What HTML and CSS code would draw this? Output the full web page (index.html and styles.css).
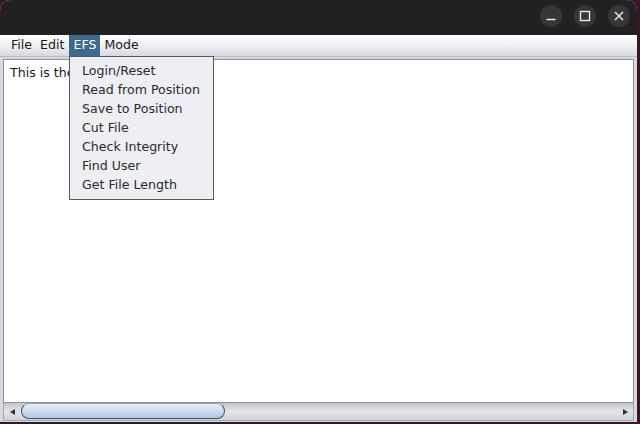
FILE: index.html
```html
<!DOCTYPE html>
<html>
<head>
<meta charset="utf-8">
<link rel="stylesheet" href="styles.css">
</head>
<body>
<div class="desktop">
  <div class="window">
    <div class="titlebar">
      <div class="tb-btn">
        <svg width="22" height="22" viewBox="0 0 22 22"><line x1="6.5" y1="14.5" x2="15.5" y2="14.5" stroke="#e8e8e8" stroke-width="1.4"/></svg>
      </div>
      <div class="tb-btn">
        <svg width="22" height="22" viewBox="0 0 22 22"><rect x="6.5" y="6.5" width="9" height="9" fill="none" stroke="#e8e8e8" stroke-width="1.4"/></svg>
      </div>
      <div class="tb-btn">
        <svg width="22" height="22" viewBox="0 0 22 22"><path d="M7 7 L15 15 M15 7 L7 15" stroke="#e8e8e8" stroke-width="1.5"/></svg>
      </div>
    </div>
    <div class="menubar">
      <span class="menu">File</span>
      <span class="menu">Edit</span>
      <span class="menu active">EFS</span>
      <span class="menu">Mode</span>
    </div>
    <div class="content">
      <div class="textarea">This is the</div>
      <div class="hscroll">
        <div class="arrow">
          <svg width="8" height="8" viewBox="0 0 8 8"><path d="M1 4 L6 1 L6 7 Z" fill="#333"/></svg>
        </div>
        <div class="track">
          <div class="thumb"></div>
          <div class="trackfill"></div>
        </div>
        <div class="arrow">
          <svg width="8" height="8" viewBox="0 0 8 8"><path d="M7 4 L2 1 L2 7 Z" fill="#333"/></svg>
        </div>
      </div>
    </div>
    <div class="popup">
      <div class="item">Login/Reset</div>
      <div class="item">Read from Position</div>
      <div class="item">Save to Position</div>
      <div class="item">Cut File</div>
      <div class="item">Check Integrity</div>
      <div class="item">Find User</div>
      <div class="item">Get File Length</div>
    </div>
  </div>
</div>
</body>
</html>
```

FILE: styles.css
```css
html, body {
  margin: 0;
  padding: 0;
  width: 640px;
  height: 424px;
  overflow: hidden;
  background: #2a1420;
}
.desktop {
  width: 640px;
  height: 424px;
  background: #3a1526;
  display: flex;
}
.window {
  position: relative;
  width: 637px;
  height: 422px;
  display: flex;
  flex-direction: column;
  background: #d4d6dc;
  border-radius: 10px 10px 0 0;
  overflow: hidden;
  font-family: "DejaVu Sans", sans-serif;
  font-size: 12.6px;
  color: #1a1a1a;
}
.titlebar {
  height: 35px;
  flex: none;
  background: #212121;
  display: flex;
  justify-content: flex-end;
  align-items: center;
  gap: 12px;
  padding-right: 7px;
  box-sizing: border-box;
}
.tb-btn {
  width: 22px;
  height: 22px;
  border-radius: 50%;
  background: #363636;
  display: flex;
  margin-top: -3px;
}
.menubar {
  height: 21px;
  flex: none;
  background: linear-gradient(#ffffff 0%, #f1f2f5 45%, #d7d9e0 100%);
  display: flex;
  align-items: stretch;
  padding-left: 7px;
  border-bottom: 1px solid #b9bcc4;
}
.menu {
  padding: 0 4px;
  display: flex;
  align-items: center;
  line-height: 1;
}
.menu.active {
  background: #3b6a8c;
  color: #ffffff;
  margin-left: 1px;
}
.content {
  flex: 1;
  display: flex;
  flex-direction: column;
  padding: 2px 3px 0 3px;
  background: #d7d9df;
}
.textarea {
  flex: 1;
  background: #ffffff;
  border: 1px solid #8d9098;
  padding: 5px 6px;
  line-height: 16px;
}
.hscroll {
  height: 17px;
  flex: none;
  display: flex;
  align-items: stretch;
  background: linear-gradient(#c4c6cc, #e2e4e8 50%, #cfd1d6);
  border: 1px solid #a6a8ae;
  border-top: none;
  margin-bottom: 1px;
}
.arrow {
  width: 17px;
  display: flex;
  align-items: center;
  justify-content: center;
  flex: none;
}
.track {
  flex: 1;
  display: flex;
  align-items: stretch;
}
.thumb {
  width: 202px;
  flex: none;
  margin: 0 0 1px 0;
  border: 1px solid #3c5670;
  border-top-color: #8ea6bd;
  border-radius: 9px;
  background: linear-gradient(#e8eff7, #c8d9ea 60%, #b3c9df);
}
.trackfill {
  flex: 1;
}
.popup {
  position: absolute;
  left: 69px;
  top: 56px;
  width: 143px;
  background: #eeeff3;
  border: 1px solid #5a5a5e;
  padding: 4px 0 5px 0;
}
.item {
  height: 19px;
  line-height: 19px;
  padding-left: 12px;
  color: #2a2a2a;
}
```
